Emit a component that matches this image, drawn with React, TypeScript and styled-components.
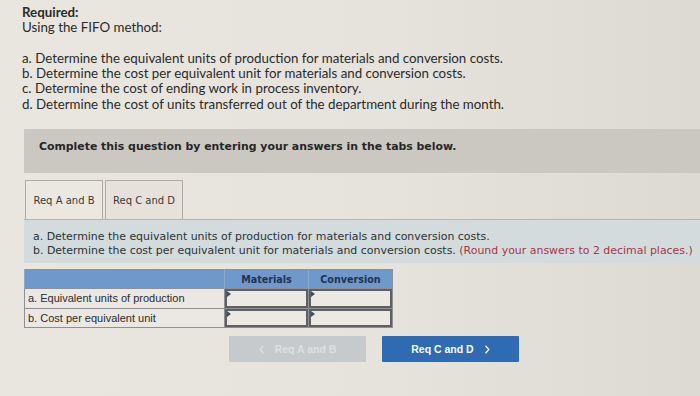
import React, {useState} from 'react'
import styled, {createGlobalStyle} from 'styled-components'

const GlobalStyle = createGlobalStyle`
    html, body {
        margin: 0;
        padding: 0;
        width: 700px;
        height: 396px;
        overflow: hidden;
        background: linear-gradient(90deg, #e9e6df 0%, #e6e3dc 55%, #dcdad3 100%);
    }
`

const proxima = `'Lato', 'Open Sans', sans-serif`
const verdana = `'DejaVu Sans', 'Verdana', sans-serif`
const arial = `'Liberation Sans', Arial, sans-serif`

const rows = [
    {key: 'a', label: 'a. Equivalent units of production'},
    {key: 'b', label: 'b. Cost per equivalent unit'},
]

export default function App() {
    const [tab, setTab] = useState('ab')

    return (
        <Page>
            <GlobalStyle/>
            <Intro>
                <strong>Required:</strong>
                <div>Using the FIFO method:</div>
                <Spacer/>
                <div>a. Determine the equivalent units of production for materials and conversion costs.</div>
                <div>b. Determine the cost per equivalent unit for materials and conversion costs.</div>
                <div>c. Determine the cost of ending work in process inventory.</div>
                <div>d. Determine the cost of units transferred out of the department during the month.</div>
            </Intro>

            <Banner>Complete this question by entering your answers in the tabs below.</Banner>

            <TabRow>
                <Tab selected={tab === 'ab'} onClick={() => setTab('ab')}>Req A and B</Tab>
                <Tab selected={tab === 'cd'} onClick={() => setTab('cd')}>Req C and D</Tab>
            </TabRow>

            <Panel>
                <div>a. Determine the equivalent units of production for materials and conversion costs.</div>
                <div>
                    b. Determine the cost per equivalent unit for materials and conversion costs.{' '}
                    <Note>(Round your answers to 2 decimal places.)</Note>
                </div>
            </Panel>

            <Table>
                <thead>
                    <tr>
                        <HeadCell style={{width: 199}}/>
                        <HeadCell>Materials</HeadCell>
                        <HeadCell>Conversion</HeadCell>
                    </tr>
                </thead>
                <tbody>
                    {rows.map(r => (
                        <tr key={r.key}>
                            <LabelCell>{r.label}</LabelCell>
                            <InputCell><Field/></InputCell>
                            <InputCell><Field/></InputCell>
                        </tr>
                    ))}
                </tbody>
            </Table>

            <Nav>
                <NavButton disabled>
                    <Chevron viewBox="0 0 8 12"><path d="M6 1L1.5 6L6 11"/></Chevron>
                    Req A and B
                </NavButton>
                <NavButton primary>
                    Req C and D
                    <Chevron viewBox="0 0 8 12"><path d="M2 1L6.5 6L2 11"/></Chevron>
                </NavButton>
            </Nav>
        </Page>
    )
}

const Page = styled.div`
    padding: 5px 0 0 22px;
    color: #2c2c2c;
`

const Intro = styled.div`
    font-family: ${proxima};
    font-size: 13.3px;
    line-height: 15.3px;
    color: #2a2a2a;

    strong {
        display: block;
        font-weight: 700;
    }
`

const Spacer = styled.div`
    height: 15.3px;
`

const Banner = styled.div`
    margin: 17px 0 0 2px;
    height: 44px;
    box-sizing: border-box;
    padding: 11px 15px 0;
    background: #cbc8c1;
    font-family: ${verdana};
    font-weight: 700;
    font-size: 10.9px;
    line-height: 14px;
    color: #262626;
`

const TabRow = styled.div`
    display: flex;
    gap: 2px;
    margin: 7px 0 0 3px;
`

const Tab = styled.button<{selected: boolean}>`
    width: 78px;
    height: 39px;
    padding: 0;
    border: 1px solid #aeaba5;
    border-bottom: none;
    background: ${({selected}) => selected ? '#ebe8e2' : '#e6e2db'};
    font-family: ${verdana};
    font-size: 10px;
    color: #3a3a3a;
    cursor: pointer;
    margin-bottom: ${({selected}) => selected ? '-1px' : '0'};
    position: relative;
    z-index: ${({selected}) => selected ? 1 : 0};
`

const Panel = styled.div`
    margin-left: 2px;
    height: 44px;
    box-sizing: border-box;
    padding: 10px 0 0 9px;
    border-top: 1px solid #b3b3b0;
    background: #d3dbdc;
    font-family: ${verdana};
    font-size: 10.95px;
    line-height: 14px;
    color: #2a3236;
    white-space: nowrap;
`

const Note = styled.span`
    color: #a33848;
`

const Table = styled.table`
    margin: 6px 0 0 2px;
    border-collapse: collapse;
    border: 1px solid #8d8f93;
    font-family: ${arial};
`

const HeadCell = styled.th`
    height: 18px;
    width: 83px;
    padding: 0;
    background: #6f98cb;
    border-left: 1px solid #8aa7cc;
    font-family: ${verdana};
    font-weight: 700;
    font-size: 9.6px;
    color: #1f344e;
    text-align: center;
`

const LabelCell = styled.td`
    height: 18px;
    padding: 0 0 0 3px;
    background: #ebe8e3;
    border: 1px solid #8d8f93;
    font-size: 11px;
    color: #2b2b2b;
    white-space: nowrap;
`

const InputCell = styled.td`
    padding: 0;
    border: 1px solid #8d8f93;
    background: #ebe8e3;
`

const Field = styled.div`
    position: relative;
    height: 18.5px;
    box-sizing: border-box;
    border: 2px solid #5d5f63;
    background: #ece9e3;

    &::before {
        content: '';
        position: absolute;
        left: 0;
        top: 0;
        border-top: 3px solid transparent;
        border-bottom: 3px solid transparent;
        border-left: 4px solid #39506d;
    }
`

const Nav = styled.div`
    display: flex;
    gap: 16px;
    margin: 8px 0 0 207px;
`

const NavButton = styled.button<{primary?: boolean}>`
    width: 137px;
    height: 26px;
    display: flex;
    align-items: center;
    justify-content: center;
    gap: 10px;
    border: none;
    border-radius: 1px;
    background: ${({primary}) => primary ? '#2e6bb3' : '#c6cacd'};
    color: ${({primary}) => primary ? '#ffffff' : '#dde0e2'};
    font-family: ${arial};
    font-weight: 700;
    font-size: 10.5px;
    cursor: pointer;
`

const Chevron = styled.svg`
    width: 6px;
    height: 9px;
    fill: none;
    stroke: currentColor;
    stroke-width: 1.6;
`
